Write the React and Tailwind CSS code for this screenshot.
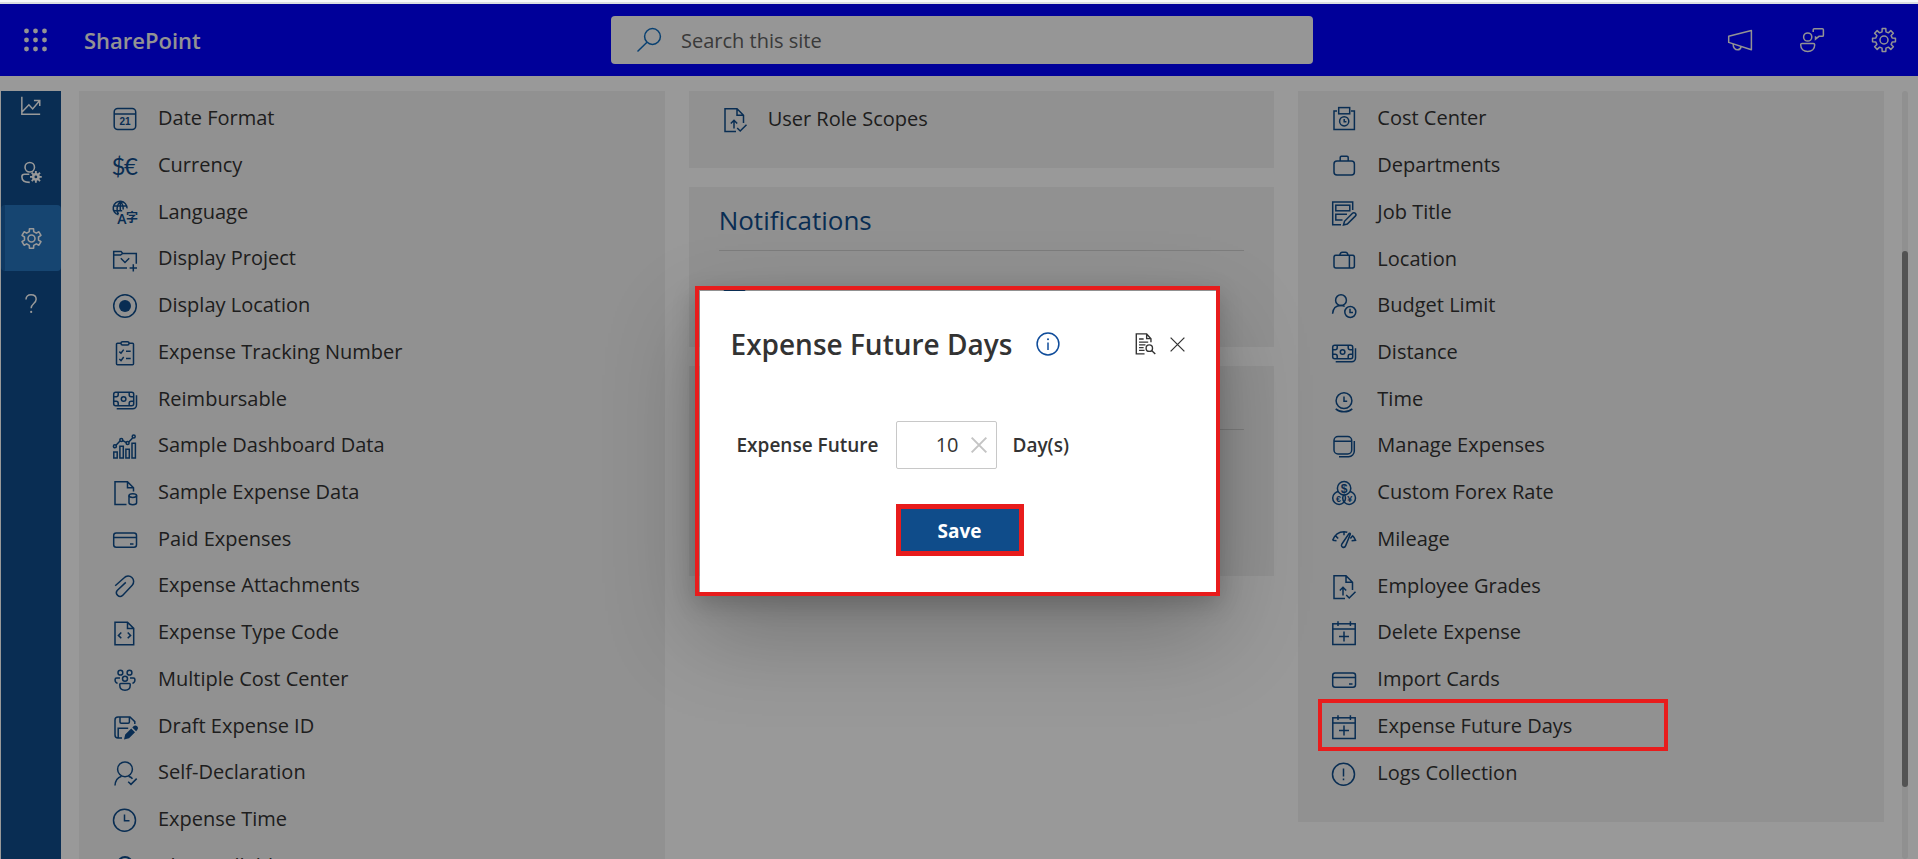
function gearPath(teeth, outer, inner, c = 12) {
  const step = (Math.PI * 2) / teeth;
  const pts = [];
  for (let i = 0; i < teeth; i++) {
    const a = i * step - Math.PI / 2;
    [
      [-0.3, inner],
      [-0.2, outer],
      [0.2, outer],
      [0.3, inner],
    ].forEach(([k, r]) => {
      pts.push(`${(c + r * Math.cos(a + k * step)).toFixed(2)} ${(c + r * Math.sin(a + k * step)).toFixed(2)}`);
    });
  }
  return `M${pts.join("L")}Z`;
}

const GEAR_8 = gearPath(8, 11.6, 8.4);
const GEAR_6 = gearPath(6, 11.4, 8.2);
const GEAR_SMALL = gearPath(8, 6.8, 4.6, 17);

function Svg({ children, className = "size-6", width = 1.5 }) {
  return (
    <svg
      viewBox="0 0 24 24"
      className={`${className} shrink-0 overflow-visible`}
      fill="none"
      stroke="currentColor"
      strokeWidth={width}
      aria-hidden="true"
    >
      {children}
    </svg>
  );
}

const glyph = { fill: "currentColor", stroke: "none", textAnchor: "middle" };

const banknote = (
  <>
    <rect x=".7" y="4.2" width="20" height="13.6" rx="2" />
    <circle cx="10.6" cy="11" r="2.3" />
    <path d="M.7 8.7h2.5a2 2 0 0 0 2-2V4.2M16.2 4.2v2.5a2 2 0 0 0 2 2h2.5M.7 13.3h2.5a2 2 0 0 1 2 2v2.5M16.2 17.8v-2.5a2 2 0 0 1 2-2h2.5" />
    <path d="M23.5 7.2v9.8a3.8 3.8 0 0 1-3.800 3.800H3.7" />
  </>
);
const fileUp = (
  <>
    <path d="M13 23.500H2V.7h12l6.500 6.500V15M14 .7v6.500h6.500" />
    <path d="M11 20.500v-8M7.800 15.500l3.200-3.200 3.200 3.200" />
    <path d="M14.200 20l3 3 6.300-6.300" />
  </>
);
const calendarPlus = (
  <>
    <rect x=".8" y="2.8" width="22.400" height="20.700" />
    <path d="M.8 8h22.400M6 .3v4.600M18.400 .3v4.600M12 10.500v10M7 15.500h10" />
  </>
);
const card = (
  <>
    <rect x=".7" y="5" width="22.800" height="14.300" rx="2.500" />
    <path d="M.7 9.500h22.800M17 16h3.500" />
  </>
);

const ICONS = {
  calendar21: (
    <>
      <rect x="1.2" y="1.4" width="21.5" height="21" rx="3.5" />
      <path d="M1.2 7h21.5" />
      <text x="12" y="18" fontSize="10" fontWeight="700" fontFamily="Liberation Sans, sans-serif" {...glyph}>21</text>
    </>
  ),
  currency: (
    <>
      <text x="5.4" y="21" fontSize="24" fontWeight="400" fontFamily="Lato, sans-serif" {...glyph}>$</text>
      <text x="18" y="21" fontSize="24" fontWeight="400" fontFamily="Lato, sans-serif" {...glyph}>€</text>
    </>
  ),
  language: (
    <>
      <path d="M5.4 13.8A6.9 6.9 0 1 1 14 7.4M.7 4.9h13M.7 9.7h8.5M7.3.5c-4 3.8-4 9.4-1.8 13M7.3.5c2 1.8 3 4.4 2.9 8M7.3.5v9.3" />
      <text x="9" y="23.4" fontSize="14" fontWeight="600" fontFamily="Open Sans, sans-serif" {...glyph}>A</text>
      <text x="19" y="20.500" fontSize="12" fontWeight="700" fontFamily="Noto Sans CJK SC, sans-serif" {...glyph}>字</text>
    </>
  ),
  folderPlus: (
    <>
      <path d="M14 21H.7V4.4h7.4l1.6 2h13.6v10.4M.7 8h6.8l2.2-1.6" />
      <path d="M7.800 11.200l4.200 4.300 4.200-4.300M20.300 17.200v7.400M16.600 20.900H24" />
    </>
  ),
  radio: (
    <>
      <circle cx="12" cy="12" r="11.3" />
      <circle cx="12" cy="12" r="6" fill="currentColor" stroke="none" />
    </>
  ),
  clipboard: (
    <>
      <path d="M8 2.300H4.500a1 1 0 0 0-1 1v19.400a1 1 0 0 0 1 1h15a1 1 0 0 0 1-1V3.300a1 1 0 0 0-1-1H16" />
      <rect x="8" y=".7" width="8" height="3.400" rx="1.500" />
      <path d="M6.300 10.600l1.700 1.600 2.700-3.600M13 10.200h4.700M6.300 18l1.700 1.600 2.700-3.600M13 17.600h4.700" />
    </>
  ),
  banknote,
  chart: (
    <>
      <path d="M.8 18h3.400v6H.8zM6.900 12.200h3.400V24H6.900zM12.900 15.200h3.400V24h-3.400zM19 9.200h3.400V24H19z" />
      <path d="M3 11.300l4-4.200M9.900 6.600l3.400 2M15.800 7.900l3.800-4" />
      <circle cx="1.9" cy="12.3" r="1.5" />
      <circle cx="8.3" cy="6" r="1.5" />
      <circle cx="14.6" cy="9" r="1.5" />
      <circle cx="20.7" cy="2.6" r="1.5" />
    </>
  ),
  fileData: (
    <>
      <path d="M13.500 23.500H2V.7h12.500l6 6v3.800M14.500.7v6h6" />
      <ellipse cx="19.8" cy="14.6" rx="3.800" ry="1.900" />
      <path d="M16 14.600v7.200c0 1 1.700 1.900 3.800 1.900s3.800-.9 3.800-1.900v-7.200" />
    </>
  ),
  card,
  clip: <path d="M2.200 11.800l9-8a5.300 5.300 0 0 1 8 7.400L9.600 21.400a3.700 3.700 0 0 1-5.400-5l8.600-8" />,
  fileCode: (
    <>
      <path d="M2 1.200h12.500l6.200 6.200V23.800H2zM14.500 1.200v6.200h6.200" />
      <path d="M8.300 11.500l-2.900 2.900 2.900 2.900M14.700 11.500l2.900 2.900-2.900 2.900" />
    </>
  ),
  people: (
    <>
      <circle cx="7.4" cy="4.7" r="2.4" />
      <circle cx="16.5" cy="4.7" r="2.4" />
      <circle cx="12" cy="10.8" r="2.5" />
      <path d="M7 10H3.600c-.9 0-1.500.6-1.500 1.500v.8c0 1.500 1 2.600 2.500 3.100M17 10h3.400c.9 0 1.500.6 1.500 1.500v.8c0 1.500-1 2.600-2.500 3.100M6.800 16.300c0-.5.400-.8.800-.8h8.800c.4 0 .8.300.8.800v1.200c0 2.900-2.200 4.700-5.200 4.700s-5.200-1.800-5.200-4.700z" />
    </>
  ),
  saveEdit: (
    <>
      <path d="M9 23H5a3 3 0 0 1-3-3V5a3 3 0 0 1 3-3h12l4.800 4.600V9M7 2v5a1.200 1.200 0 0 0 1.200 1.200h7A1.200 1.200 0 0 0 16.400 7V2M5.200 22.800v-9.600h10" />
      <path d="M11 24.500l1.200-5 6-6 3.800 3.800-6 6zM19.300 12.400l1.200-1.100a2.600 2.600 0 0 1 3.700 3.700l-1.100 1.200z" fill="currentColor" stroke="none" />
    </>
  ),
  personCheck: (
    <>
      <circle cx="12" cy="8.3" r="7.4" />
      <path d="M2 24.500c.3-5.200 3-8 6.500-9.200M15.500 15.300c1.700.5 3 1.300 4 2.500M15.200 20.700l2.800 2.700 5.700-5.800" />
    </>
  ),
  clock: (
    <>
      <circle cx="11.5" cy="12.2" r="11" />
      <path d="M11.500 6.500v6.300h5" />
    </>
  ),
  person: (
    <>
      <circle cx="12" cy="9" r="7" strokeWidth="2" />
      <path d="M3 24c.5-5 4-8 9-8s8.500 3 9 8" />
    </>
  ),
  fileUp,
  costCenter: (
    <>
      <path d="M5 4H2v18.400h20.400V4H19" />
      <rect x="6.7" y=".6" width="11" height="6.2" />
      <circle cx="12.2" cy="14.3" r="4.6" />
      <path d="M12.200 12v2.700h2.200" />
    </>
  ),
  briefcase: (
    <>
      <rect x="2" y="7" width="20.4" height="14" rx="3" />
      <path d="M8.200 7V3.400c0-.7.500-1.200 1.200-1.200h5.600c.7 0 1.200.5 1.200 1.200V7" />
    </>
  ),
  formEdit: (
    <>
      <path d="M9 23.700H.7V1h20v8" />
      <rect x="3.8" y="4.2" width="14" height="5.6" />
      <path d="M15 13.300H3.800v5.800h6.700" />
      <path d="M11.500 24l1-3.700 8-8a1.900 1.900 0 0 1 2.800 2.800l-8 8z" />
    </>
  ),
  suitcase: (
    <>
      <rect x="2" y="7.3" width="20.4" height="12.8" rx="2" />
      <path d="M17.400 7.300v12.800M7.800 7.300C8 5 9 4.200 10.500 4.200h2.800c1.500 0 2.500.8 2.700 3.100" />
    </>
  ),
  personClock: (
    <>
      <circle cx="9" cy="6.2" r="5.4" />
      <path d="M.6 19.800c.3-4.800 3-8.200 8.400-8.200 1.500 0 2.700.3 3.700.8" />
      <circle cx="18.3" cy="18" r="5.5" />
      <path d="M18 14.800V18.600h3" />
    </>
  ),
  clockBase: (
    <>
      <circle cx="12" cy="12.700" r="7.900" />
      <path d="M12 8.500v4.700h3.200M3.700 20.800c4.800 4 11.800 4 16.600 0" />
    </>
  ),
  windows: (
    <>
      <rect x="2" y="2.600" width="17.700" height="17.400" rx="4" />
      <path d="M2 7.300h17.700M22.300 7v10a5.700 5.700 0 0 1-5.700 5.700H7" />
    </>
  ),
  forex: (
    <>
      <circle cx="7.1" cy="17" r="6.4" />
      <circle cx="17.1" cy="17" r="6.4" />
      <circle cx="12.1" cy="7.300" r="6.700" className="fill-[#f2f2f2]" />
      <text x="12.1" y="11.600" fontSize="12" fontWeight="700" fontFamily="Liberation Sans, sans-serif" {...glyph}>$</text>
      <text x="6.600" y="20.800" fontSize="9" fontWeight="700" fontFamily="Liberation Sans, sans-serif" {...glyph}>€</text>
      <text x="17.700" y="20.800" fontSize="9" fontWeight="700" fontFamily="Liberation Sans, sans-serif" {...glyph}>¥</text>
    </>
  ),
  gauge: (
    <>
      <path d="M.6 12.300C2.500 7.500 6.500 3.800 12 3.800c1.200 0 2.300.2 3.300.5M12 3.800v3.400M3.600 7.900l2.600 2.600M.6 12.300l3.900.4M20.200 7.400c1.500 1.300 2.600 2.900 3.300 4.900l-3.900.4M20.400 8l-2 2.500" />
      <path d="M17.200 5.400c.7-.4 1.400 0 1.100.8L13.700 17.600c-.6 1.500-1.700 2.100-3 1.600-1.300-.6-1.600-1.800-.8-3.200z" />
    </>
  ),
  calendarPlus,
  alert: (
    <>
      <circle cx="11.5" cy="12.2" r="11" />
      <path d="M11.500 6.500v8M11.500 16.500v1.800" />
    </>
  ),
  bell: (
    <>
      <rect x="1" y="1.500" width="21" height="18" rx="1.500" />
      <path d="M1 8h21" />
    </>
  ),
};

const GENERAL = [
  ["Date Format", "calendar21"],
  ["Currency", "currency"],
  ["Language", "language"],
  ["Display Project", "folderPlus"],
  ["Display Location", "radio"],
  ["Expense Tracking Number", "clipboard"],
  ["Reimbursable", "banknote"],
  ["Sample Dashboard Data", "chart"],
  ["Sample Expense Data", "fileData"],
  ["Paid Expenses", "card"],
  ["Expense Attachments", "clip"],
  ["Expense Type Code", "fileCode"],
  ["Multiple Cost Center", "people"],
  ["Draft Expense ID", "saveEdit"],
  ["Self-Declaration", "personCheck"],
  ["Expense Time", "clock"],
  ["Client Billable", "person"],
];

const MASTERS = [
  ["Cost Center", "costCenter"],
  ["Departments", "briefcase"],
  ["Job Title", "formEdit"],
  ["Location", "suitcase"],
  ["Budget Limit", "personClock"],
  ["Distance", "banknote"],
  ["Time", "clockBase"],
  ["Manage Expenses", "windows"],
  ["Custom Forex Rate", "forex"],
  ["Mileage", "gauge"],
  ["Employee Grades", "fileUp"],
  ["Delete Expense", "calendarPlus"],
  ["Import Cards", "card"],
  ["Expense Future Days", "calendarPlus", true],
  ["Logs Collection", "alert"],
];

function SettingsList({ items, className }) {
  return (
    <ul className={`grid auto-rows-fr ${className}`}>
      {items.map(([label, icon, highlighted]) => (
        <li key={label} className="relative flex items-center">
          <a href="#" className="flex items-center gap-[21px] pl-[34px] text-xl text-[#333333]">
            <span className="mt-0.5 text-[#0f4c8a]">
              <Svg>{ICONS[icon]}</Svg>
            </span>
            {label}
          </a>
          {highlighted && (
            <span className="pointer-events-none absolute -top-1 -bottom-0.5 left-5 z-30 w-[350px] border-4 border-[#e81c1c]" />
          )}
        </li>
      ))}
    </ul>
  );
}

function Header() {
  return (
    <header className="flex h-[72px] shrink-0 items-center bg-[#0000ff] pl-1.5 text-[#f5f5f5]">
      <div className="flex flex-1 items-center gap-9 pl-[18px]">
        <button type="button" aria-label="App launcher">
          <svg viewBox="0 0 24 24" className="size-6" fill="currentColor" aria-hidden="true">
            {[3, 12, 21].map((y) => [2.5, 11.5, 20.5].map((x) => <circle key={`${x}-${y}`} cx={x} cy={y} r="2.4" />))}
          </svg>
        </button>
        <a href="#" className="text-[22px] font-semibold">SharePoint</a>
      </div>
      <label className="ml-1 flex h-12 w-full max-w-[702px] items-center gap-5 rounded bg-[#fafafa] pl-[26px]">
        <span className="text-[#0f6cbd]">
          <Svg>
            <circle cx="15.5" cy="8.5" r="7.9" />
            <path d="M10 14.200L.5 23.500" />
          </Svg>
        </span>
        <input
          type="search"
          aria-label="Search this site"
          placeholder="Search this site"
          className="h-full flex-1 bg-transparent text-xl outline-none placeholder:text-[#616161]"
        />
      </label>
      <div className="flex flex-1 items-center justify-end gap-12 pr-[22px]">
        <button type="button" aria-label="Announcements">
          <Svg>
            <path d="M.7 8.200L23.400 2.500V21.700L.7 14.400z" strokeLinejoin="round" />
            <path d="M5.200 16c-.2 3.500 1.800 5.800 4.500 5.800 2 0 3-1.300 3.500-3.300" />
          </Svg>
        </button>
        <button type="button" aria-label="Feedback">
          <Svg>
            <circle cx="7.7" cy="9" r="4.1" />
            <path d="M2 15.400h11.300c.8 0 1.400.6 1.400 1.300 0 4.300-3 6.700-7 6.700S.7 21 .7 16.700c0-.7.600-1.300 1.300-1.300zM13.200 4V1.800c0-.6.500-1.100 1.100-1.100h8c.6 0 1.100.5 1.100 1.100v5.400c0 .6-.5 1.100-1.100 1.100h-3.300l-3.500 2.900V8.300" />
          </Svg>
        </button>
        <button type="button" aria-label="Settings">
          <Svg>
            <path d={GEAR_8} strokeLinejoin="round" />
            <circle cx="12" cy="12" r="4" />
          </Svg>
        </button>
      </div>
    </header>
  );
}

function Sidebar() {
  const item = "flex h-[66px] items-center justify-center text-white";
  return (
    <nav aria-label="Main" className="ml-px w-[60px] shrink-0 overflow-hidden bg-[#0f4c8a]">
      <ul className="-mt-[18px]">
        <li>
          <a href="#" aria-label="Dashboard" className={item}>
            <Svg className="size-5" width={1.8}>
              <path d="M1 1v21h22M1.500 19l8-8.500 4.500 5L22 6M15.500 5.500H22.500V12" />
            </Svg>
          </a>
        </li>
        <li>
          <a href="#" aria-label="Users" className={item}>
            <Svg className="size-[21px]" width={1.8}>
              <circle cx="10" cy="6" r="5.4" />
              <path d="M9.500 14H4c-1.700 0-3 1-3 2.800C1 21 4.500 23.300 10 23.300" />
              <path d={GEAR_SMALL} fill="currentColor" stroke="none" />
              <circle cx="17" cy="17" r="1.6" className="fill-[#0f4c8a] stroke-none" />
            </Svg>
          </a>
        </li>
        <li>
          <a href="#" aria-label="Settings" aria-current="page" className={`${item} rounded-sm border-l-4 border-[#1a60a5] bg-[#2673bc] pr-1`}>
            <Svg className="size-[21px]" width={1.8}>
              <path d={GEAR_6} strokeLinejoin="round" />
              <circle cx="12" cy="12" r="4" />
            </Svg>
          </a>
        </li>
        <li>
          <a href="#" aria-label="Help" className={item}>
            <Svg className="size-5" width={1.8}>
              <path d="M6 6.500C6 3 8.300 1 12 1s6.200 2 6.200 5.300c0 5-6 5.200-6 10.700" />
              <circle cx="12.2" cy="21.5" r="1.3" fill="currentColor" stroke="none" />
            </Svg>
          </a>
        </li>
      </ul>
    </nav>
  );
}

function Dialog() {
  return (
    <div className="absolute inset-0 z-40 grid place-items-center pt-[19px] pr-1">
      <div className="border-4 border-[#e81c1c] pt-px pl-px shadow-[0_38px_86px_rgba(0,0,0,0.24),0_8px_22px_rgba(0,0,0,0.18)]">
        <section role="dialog" aria-labelledby="dialog-title" className="w-[516px] bg-white px-[31px] pt-8 pb-9 text-[#333333]">
          <div className="flex h-[42px] items-center">
            <h2 id="dialog-title" className="text-[28px] font-semibold">Expense Future Days</h2>
            <button type="button" aria-label="Information" className="ml-6 text-[#0f4c9a]">
              <Svg>
                <circle cx="12" cy="12" r="10.9" />
                <path d="M12 10.500v7.500" />
                <circle cx="12" cy="7.300" r="1" fill="currentColor" stroke="none" />
              </Svg>
            </button>
            <button type="button" aria-label="View logs" className="ml-auto">
              <Svg className="size-[22px]">
                <path d="M11.500 22.800H2.500V1h11.300l4.700 5.200V10M13.800 1v5.200h4.700M5.500 6.500h5M5.500 10h10M5.500 13h7M5.500 16h5M5.500 19h6" />
                <circle cx="16.7" cy="16.5" r="3.5" />
                <path d="M19.200 19l4 4" />
              </Svg>
            </button>
            <button type="button" aria-label="Close" className="ml-[14px]">
              <Svg className="size-[15px]" width={2}>
                <path d="M1 1l22 22M23 1L1 23" />
              </Svg>
            </button>
          </div>
          <div className="mt-14 flex items-center pl-1.5 text-[19px] font-semibold">
            <label htmlFor="future-days" className="w-[159px]">Expense Future</label>
            <span className="flex h-12 w-[101px] items-center gap-3 rounded-xs border border-[#c8c8c8] pr-[9px]">
              <input
                id="future-days"
                defaultValue="10"
                inputMode="numeric"
                className="w-full min-w-0 bg-transparent text-right text-xl font-normal outline-none"
              />
              <button type="button" aria-label="Clear" className="text-[#c4c4c4]">
                <Svg className="size-4" width={3}>
                  <path d="M1 1l22 22M23 1L1 23" />
                </Svg>
              </button>
            </span>
            <span className="ml-4">Day(s)</span>
          </div>
          <div className="mt-[35px] flex pl-[165px]">
            <button type="submit" className="h-[52px] w-32 border-[5px] border-[#e81c1c] bg-[#0f4c8a] pt-0.5 text-[19px] font-bold text-white">
              Save
            </button>
          </div>
        </section>
      </div>
    </div>
  );
}

export default function App() {
  const panel = "bg-[#f2f2f2]";
  return (
    <div className="flex h-screen flex-col overflow-hidden bg-white font-['Open_Sans','Noto_Sans',sans-serif]">
      <div className="h-1 shrink-0 border-t-2 border-[#f6f8fa] bg-[#dadde0]" />
      <div className="relative flex min-h-0 flex-1 flex-col">
        <Header />
        <div className="flex min-h-0 flex-1 pt-[15px]">
          <Sidebar />
          <main className="grid flex-1 grid-cols-3 items-start gap-6 overflow-hidden px-[18px]">
            <section className={`${panel} pt-1 pb-[26px]`}>
              <SettingsList items={GENERAL} className="h-[794px]" />
            </section>
            <div className="flex flex-col gap-[19px]">
              <section className={`${panel} pt-1 pb-[26px]`}>
                <SettingsList items={[["User Role Scopes", "fileUp"]]} className="h-[47px]" />
              </section>
              <section className={`${panel} pb-6`}>
                <h2 className="mx-[30px] flex h-16 items-center border-b border-[#d0d0d0] pt-1 text-[26px] text-[#0f4c8a]">
                  Notifications
                </h2>
                <SettingsList items={[["Email Notifications", "bell"]]} className="mt-[25px] h-[47px]" />
              </section>
              <section className={`${panel} pb-[146px]`}>
                <div className="mx-[30px] h-16 border-b border-[#d0d0d0]" />
              </section>
            </div>
            <section className={`${panel} pt-1 pb-[26px]`}>
              <SettingsList items={MASTERS} className="h-[701px]" />
            </section>
          </main>
          <div className="mr-2.5 w-1.5 shrink-0 rounded-full bg-[#f0f0f0] pt-40">
            <div className="h-[536px] rounded-full bg-[#8a8a8a]" />
          </div>
        </div>
        <div className="absolute inset-0 z-20 bg-black/40" />
        <Dialog />
      </div>
    </div>
  );
}
